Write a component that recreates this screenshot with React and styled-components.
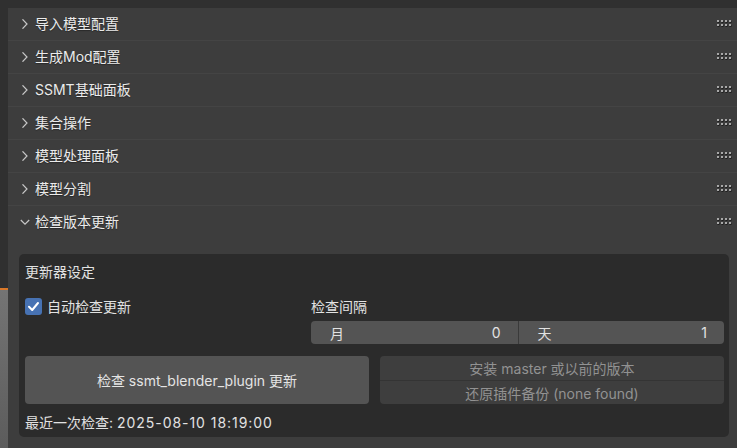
import React from "react";
import styled, { createGlobalStyle } from "styled-components";

const Global = createGlobalStyle`
  html, body { margin: 0; padding: 0; background: #2f2f2f; }
  * { box-sizing: border-box; }
`;

const Viewport = styled.div`
  width: 737px;
  height: 448px;
  overflow: hidden;
  padding: 8px 0 0 8px;
  background:
    linear-gradient(to bottom, #303030 0, #303030 288px, #d9782a 288px, #d9782a 290px, #747474 290px, #5c5c5c 448px);
  font-family: "Inter", "Noto Sans CJK SC", sans-serif;
  font-size: 14px;
  color: #e2e2e2;
`;

const Region = styled.div`
  display: flex;
  flex-direction: column;
  height: 100%;
  background: #3d3d3d;
`;

const Header = styled.div`
  display: flex;
  align-items: center;
  height: 33px;
  padding: 0 5px 1px 12px;
  border-bottom: 1px solid #464646;
  background: #3d3d3d;
  gap: 5px;
  color: #ebebeb;
  text-shadow: 0 1px 1px rgba(0,0,0,0.35);
  border-bottom-color: ${(p) => (p.$open ? "transparent" : "#444444")};
`;

const Title = styled.span`
  flex: 1;
  line-height: 1;
`;

const Body = styled.div`
  flex: 1;
  padding: 15px 8px 0 11px;
`;

const Box = styled.div`
  background: #2b2b2b;
  border-radius: 5px;
  padding: 5px 5px 3px 6px;
  display: flex;
  flex-direction: column;
`;

const Line = styled.div`
  height: 24px;
  display: flex;
  align-items: center;
`;

const Settings = styled.div`
  display: grid;
  grid-template-columns: 286px 1fr;
  margin-top: 12px;
`;

const Column = styled.div`
  display: flex;
  flex-direction: column;
  gap: 4px;
`;

const CheckRow = styled.label`
  height: 22px;
  display: flex;
  align-items: center;
  gap: 5px;
`;

const CheckBox = styled.span`
  width: 17px;
  height: 17px;
  border-radius: 3px;
  background: #4772b3;
  display: flex;
  align-items: center;
  justify-content: center;
`;

const Label = styled.div`
  height: 22px;
  display: flex;
  align-items: center;
`;

const NumField = styled.div`
  display: grid;
  grid-template-columns: 1fr 1fr;
  height: 23px;
  border-radius: 4px;
  overflow: hidden;
  background: #545454;
`;

const NumHalf = styled.div`
  display: flex;
  align-items: center;
  justify-content: space-between;
  padding: 0 17px 0 19px;
  border-left: ${(p) => (p.$second ? "1px solid #3a3a3a" : "none")};
`;

const Buttons = styled.div`
  display: grid;
  grid-template-columns: 1fr 1fr;
  gap: 11px;
  margin-top: 12px;
  height: 48px;
`;

const BigButton = styled.div`
  background: #545454;
  border-radius: 4px;
  display: flex;
  align-items: center;
  justify-content: center;
  color: #e4e4e4;
`;

const Stack = styled.div`
  display: grid;
  grid-template-rows: 1fr 1fr;
  border-radius: 4px;
  overflow: hidden;
  background: #3e3e3e;
`;

const DisabledButton = styled.div`
  display: flex;
  align-items: center;
  justify-content: center;
  color: #929292;
  border-top: ${(p) => (p.$second ? "1px solid #343434" : "none")};
`;

const Footer = styled.div`
  height: 24px;
  margin-top: 6px;
  display: flex;
  align-items: center;
`;

const Stamp = styled.span`
  letter-spacing: 0.95px;
  margin-left: 4px;
`;

const Chevron = ({ open }) => (
  <svg width="10" height="10" viewBox="0 0 10 10" style={{ flex: "none" }}>
    {open ? (
      <polyline points="0.8,3 5,7.2 9.2,3" fill="none" stroke="#c8c8c8" strokeWidth="1.2" />
    ) : (
      <polyline points="2.5,0.3 7,5 2.5,9.7" fill="none" stroke="#c8c8c8" strokeWidth="1.2" />
    )}
  </svg>
);

const Grip = () => (
  <svg width="15" height="8" viewBox="0 0 15 8">
    {[0, 1].map((r) =>
      [0, 1, 2, 3].map((c) => (
        <g key={`${r}-${c}`}>
          <rect x={c * 4 + 0.5} y={r * 4 + 1} width="2" height="2" fill="#1e1e1e" />
          <rect x={c * 4} y={r * 4} width="2" height="2" fill="#a8a8a8" />
        </g>
      ))
    )}
  </svg>
);

const panels = ["导入模型配置", "生成Mod配置", "SSMT基础面板", "集合操作", "模型处理面板", "模型分割"];

export default function App() {
  return (
    <>
      <Global />
      <Viewport>
        <Region>
          {panels.map((p) => (
            <Header key={p}>
              <Chevron />
              <Title>{p}</Title>
              <Grip />
            </Header>
          ))}
          <Header $open>
            <Chevron open />
            <Title>检查版本更新</Title>
            <Grip />
          </Header>
          <Body>
            <Box>
              <Line>更新器设定</Line>
              <Settings>
                <Column>
                  <CheckRow>
                    <CheckBox>
                      <svg width="13" height="13" viewBox="0 0 13 13">
                        <polyline points="2,6.8 5.2,10 11,3" fill="none" stroke="#ffffff" strokeWidth="2" strokeLinecap="round" strokeLinejoin="round" />
                      </svg>
                    </CheckBox>
                    自动检查更新
                  </CheckRow>
                </Column>
                <Column>
                  <Label>检查间隔</Label>
                  <NumField>
                    <NumHalf>
                      <span>月</span>
                      <span>0</span>
                    </NumHalf>
                    <NumHalf $second>
                      <span>天</span>
                      <span>1</span>
                    </NumHalf>
                  </NumField>
                </Column>
              </Settings>
              <Buttons>
                <BigButton>检查 ssmt_blender_plugin 更新</BigButton>
                <Stack>
                  <DisabledButton>安装 master 或以前的版本</DisabledButton>
                  <DisabledButton $second>还原插件备份 (none found)</DisabledButton>
                </Stack>
              </Buttons>
              <Footer>
                最近一次检查:<Stamp>2025-08-10 18:19:00</Stamp>
              </Footer>
            </Box>
          </Body>
        </Region>
      </Viewport>
    </>
  );
}
